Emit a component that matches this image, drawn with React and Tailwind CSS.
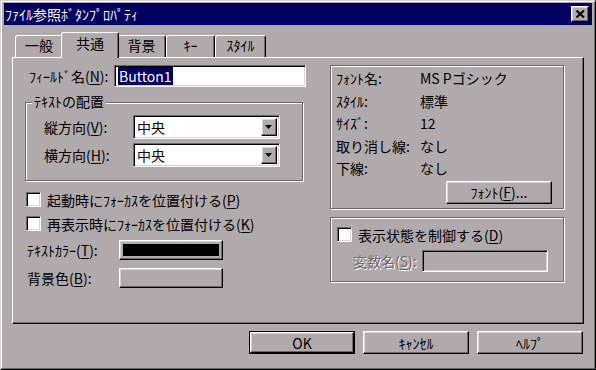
import React from "react";

const raised =
  "border border-t-white border-l-white border-r-black border-b-black shadow-[inset_-1px_-1px_0_#6e686b,inset_1px_1px_0_#d8d4d6]";
const sunken =
  "border border-t-[#6e686b] border-l-[#6e686b] border-r-white border-b-white shadow-[inset_1px_1px_0_#000,inset_-1px_-1px_0_#d8d4d6]";
const etched = "border border-[#6e686b] shadow-[inset_1px_1px_0_#fff,1px_1px_0_#fff]";

function U({ children }) {
  return <span className="underline underline-offset-[2px]">{children}</span>;
}

function Checkbox() {
  return <div className={"w-[15px] h-[15px] bg-white shrink-0 " + sunken} />;
}

function Combo({ value }) {
  return (
    <div className={"w-[147px] h-[24px] bg-white flex items-stretch p-[2px] " + sunken}>
      <div className="flex-1 flex items-center pl-[1px] leading-none">{value}</div>
      <div className={"w-[16px] bg-[#b0aaad] flex items-center justify-center " + raised}>
        <svg width="8" height="5" viewBox="0 0 8 5">
          <path d="M0 0h7L3.5 4z" fill="#000" />
        </svg>
      </div>
    </div>
  );
}

function Tab({ label, w, selected }) {
  if (selected) {
    return (
      <div
        className={
          "relative z-10 -mx-[2px] -mb-px h-[26px] bg-[#b0aaad] border border-b-0 border-t-white border-l-white border-r-black rounded-t-[3px] shadow-[inset_-1px_0_0_#6e686b] flex items-start justify-center pt-[3px] " +
          w
        }
      >
        {label}
      </div>
    );
  }
  return (
    <div
      className={
        "h-[22px] border border-b-0 border-t-white border-l-white border-r-black rounded-t-[3px] shadow-[inset_-1px_0_0_#6e686b] flex items-start justify-center pt-[2px] " +
        w
      }
    >
      {label}
    </div>
  );
}

function Btn({ children, def, w }) {
  if (def) {
    return (
      <div className={"h-[23px] border border-black " + w}>
        <div className={"h-full flex items-center justify-center " + raised}>{children}</div>
      </div>
    );
  }
  return <div className={"h-[23px] flex items-center justify-center " + raised + " " + w}>{children}</div>;
}

export default function App() {
  return (
    <div className="w-[596px] h-[370px] overflow-hidden bg-[#b0aaad] text-black text-[14px] font-['Noto_Sans_CJK_JP','Noto_Sans_CJK_SC',sans-serif] border border-t-[#d6d2d4] border-l-[#d6d2d4] border-r-black border-b-black">
      <div className="h-full flex flex-col border border-t-white border-l-white border-r-[#6e686b] border-b-[#6e686b] px-[2px] pt-[1px]">
        {/* title bar */}
        <div className="h-[22px] bg-[#000060] flex items-center justify-between pl-[1px] pr-[3px]">
          <span className="text-white leading-none">ﾌｧｲﾙ参照ﾎﾞﾀﾝﾌﾟﾛﾊﾟﾃｨ</span>
          <div className={"w-[18px] h-[16px] bg-[#b0aaad] flex items-center justify-center " + raised}>
            <svg width="9" height="8" viewBox="0 0 9 8">
              <path d="M0.5 0.5L8 7.5M8 0.5L0.5 7.5" stroke="#000" strokeWidth="2" />
            </svg>
          </div>
        </div>

        <div className="px-[8px] flex flex-col">
          {/* tabs */}
          <div className="mt-[7px] flex items-end pl-[3px] leading-none">
            <Tab label="一般" w="w-[48px]" />
            <Tab label="共通" w="w-[58px]" selected />
            <Tab label="背景" w="w-[49px]" />
            <Tab label="ｷｰ" w="w-[49px]" />
            <Tab label="ｽﾀｲﾙ" w="w-[51px]" />
          </div>

          {/* panel */}
          <div className="h-[267px] border border-t-white border-l-white border-r-black border-b-black shadow-[inset_-1px_-1px_0_#6e686b] flex pt-[7px] pl-[12px]">
            {/* left column */}
            <div className="w-[281px] flex flex-col">
              <div className="h-[22px] flex items-center">
                <span className="flex-1 pl-[4px] leading-none">
                  ﾌｨｰﾙﾄﾞ名(<U>N</U>):
                </span>
                <div className={"w-[192px] h-[22px] bg-white flex items-center px-[3px] " + sunken}>
                  <span className="bg-[#000060] text-white leading-none px-px py-[2px]">Button1</span>
                </div>
              </div>

              <div className={"relative mt-[15px] w-[278px] h-[79px] pt-[12px] flex flex-col gap-[4px] " + etched}>
                <span className="absolute -top-[9px] left-[6px] bg-[#b0aaad] px-[2px] leading-none">ﾃｷｽﾄの配置</span>
                <div className="flex items-center">
                  <span className="w-[107px] pl-[18px] leading-none">
                    縦方向(<U>V</U>):
                  </span>
                  <Combo value="中央" />
                </div>
                <div className="flex items-center">
                  <span className="w-[107px] pl-[18px] leading-none">
                    横方向(<U>H</U>):
                  </span>
                  <Combo value="中央" />
                </div>
              </div>

              <div className="mt-[11px] flex items-center h-[15px] pl-[1px]">
                <Checkbox />
                <span className="ml-[6px] leading-none">
                  起動時にﾌｫｰｶｽを位置付ける(<U>P</U>)
                </span>
              </div>
              <div className="mt-[9px] flex items-center h-[15px] pl-[1px]">
                <Checkbox />
                <span className="ml-[6px] leading-none">
                  再表示時にﾌｫｰｶｽを位置付ける(<U>K</U>)
                </span>
              </div>

              <div className="mt-[9px] flex items-center">
                <span className="w-[94px] pl-[2px] leading-none">
                  ﾃｷｽﾄｶﾗｰ(<U>T</U>):
                </span>
                <div className={"w-[104px] h-[20px] p-[3px] " + raised}>
                  <div className="w-full h-full bg-black" />
                </div>
              </div>
              <div className="mt-[8px] flex items-center">
                <span className="w-[94px] pl-[2px] leading-none">
                  背景色(<U>B</U>):
                </span>
                <div className={"w-[104px] h-[20px] p-[3px] " + raised}>
                  <div className="w-full h-full bg-[#b0aaad]" />
                </div>
              </div>
            </div>

            {/* right column */}
            <div className="ml-[24px] w-[234px] flex flex-col">
              <div className={"h-[144px] flex flex-col pt-[1px] " + etched}>
                {[
                  ["ﾌｫﾝﾄ名:", "MS Pゴシック"],
                  ["ｽﾀｲﾙ:", "標準"],
                  ["ｻｲｽﾞ:", "12"],
                  ["取り消し線:", "なし"],
                  ["下線:", "なし"],
                ].map(([k, v]) => (
                  <div key={k} className="h-[22.5px] flex items-center leading-none">
                    <span className="w-[89px] pl-[5px]">{k}</span>
                    <span>{v}</span>
                  </div>
                ))}
                <div className="mt-[1px] self-end mr-[11px]">
                  <Btn w="w-[106px]">
                    <span className="leading-none">
                      ﾌｫﾝﾄ(<U>F</U>)...
                    </span>
                  </Btn>
                </div>
              </div>

              <div className={"mt-[8px] h-[65px] flex flex-col pt-[9px] " + etched}>
                <div className="flex items-center pl-[6px] h-[15px]">
                  <Checkbox />
                  <span className="ml-[6px] leading-none">
                    表示状態を制御する(<U>D</U>)
                  </span>
                </div>
                <div className="mt-[8px] flex items-center">
                  <span className="w-[91px] pl-[22px] leading-none text-[#6e686b] [text-shadow:1px_1px_0_#fff]">
                    変数名(<U>S</U>):
                  </span>
                  <div className={"w-[126px] h-[22px] bg-[#b0aaad] " + sunken} />
                </div>
              </div>
            </div>
          </div>

          {/* buttons */}
          <div className="mt-[7px] flex justify-end gap-[8px] pr-[1px] leading-none">
            <Btn def w="w-[106px]">OK</Btn>
            <Btn w="w-[106px]">ｷｬﾝｾﾙ</Btn>
            <Btn w="w-[106px]">ﾍﾙﾌﾟ</Btn>
          </div>
        </div>
      </div>
    </div>
  );
}
